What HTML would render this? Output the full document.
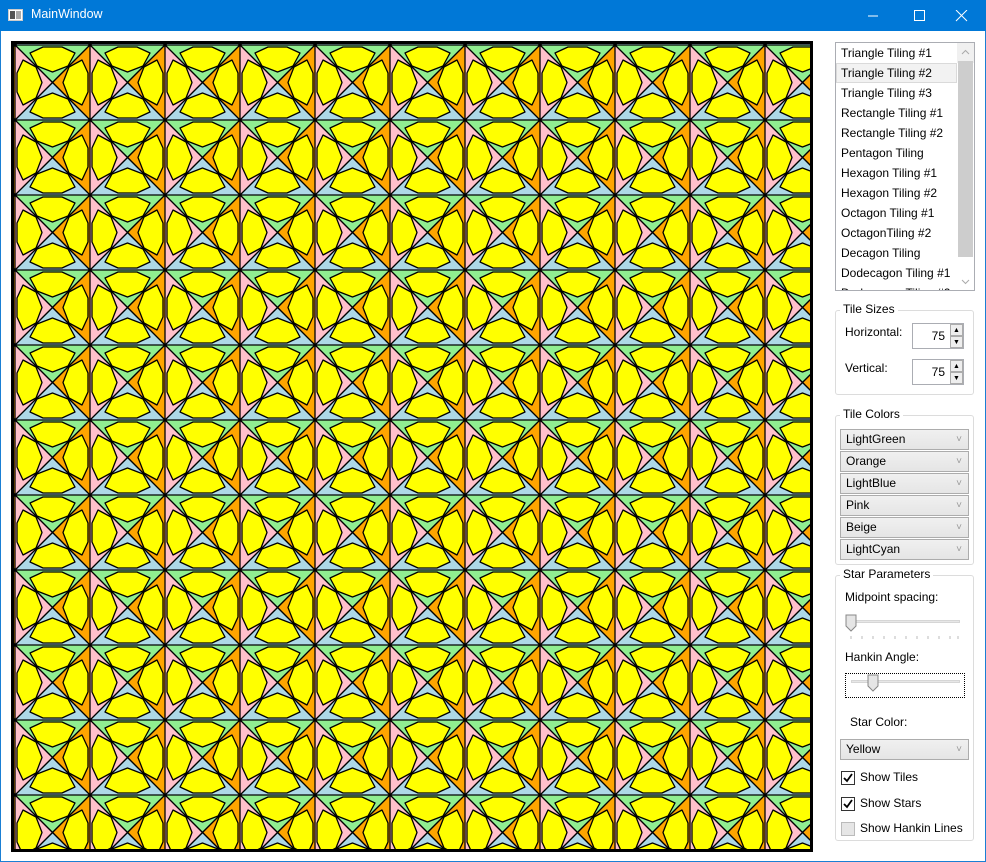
<!DOCTYPE html>
<html><head><meta charset="utf-8"><style>
*{box-sizing:border-box}
body{margin:0;width:986px;height:862px;overflow:hidden;font-family:"Segoe UI","Liberation Sans",sans-serif;font-size:12px;color:#000;background:#fff;position:relative}
.tb{position:absolute;left:0;top:0;width:986px;height:31px;background:#0078d7;color:#fff}
.tb .t{position:absolute;left:31px;top:7px;font-size:12.5px}
.win{position:absolute;left:0;top:31px;width:986px;height:831px;border:1px solid #1a7fd4;border-top:none;background:#fff}
.abs{position:absolute}
.lb{left:835px;top:42px;width:140px;height:249px;border:1px solid #abadb3;overflow:hidden}
.lb div{height:20px;line-height:20px;padding-left:5px;white-space:nowrap}
.sb{position:absolute;right:0;top:0;width:17px;height:247px;background:#f0f0f0}
.grp{border:1px solid #dcdcdc;border-radius:3px}
.gl{position:absolute;background:#fff;padding:0 3px;left:4px;top:-9px}
.dd{position:absolute;left:4px;width:129px;height:21px;border:1px solid #acacac;background:linear-gradient(#f0f0f0,#e5e5e5);padding-left:5px;line-height:19px}
.dd:after{content:"˅";position:absolute;right:6px;top:0;font-size:10px;color:#999}
.sp{position:absolute;left:76px;width:52px;height:26px;border:1px solid #abadb3}
.sp span{position:absolute;right:18px;top:5px}
.sp i{position:absolute;right:0;width:13px;height:12px;border:1px solid #acacac;background:#eee;font-size:7px;text-align:center;line-height:11px;font-style:normal}
.cb{position:absolute;left:5px;width:14px;height:14px;border:1px solid #333;background:#fff}
</style></head><body>
<div class="tb"><svg class="abs" style="left:8px;top:9px" width="15" height="12"><rect x="0.5" y="0.5" width="14" height="11" fill="#fff" stroke="#ccc"/><rect x="2" y="2" width="5" height="8" fill="#555"/><rect x="8" y="2" width="5" height="8" fill="#aaa"/></svg><span class="t">MainWindow</span>
<svg class="abs" style="left:864px;top:10px" width="110" height="12"><line x1="4" y1="6" x2="14" y2="6" stroke="#fff"/><rect x="50.5" y="0.5" width="10" height="10" fill="none" stroke="#fff"/><path d="M92 0L103 11M103 0L92 11" stroke="#fff"/></svg></div>
<div class="win"></div>
<svg class="abs" style="left:11px;top:41px" width="802" height="811">
<defs><pattern id="p" x="4" y="4" width="75" height="75" patternUnits="userSpaceOnUse">
<g stroke="#000" stroke-width="1.3" stroke-linejoin="round">
<polygon points="0,0 75,0 37.5,37.5" fill="#90ee90"/>
<polygon points="75,0 75,75 37.5,37.5" fill="#ffa500"/>
<polygon points="0,75 75,75 37.5,37.5" fill="#add8e6"/>
<polygon points="0,0 0,75 37.5,37.5" fill="#ffc0cb"/>
<g id="s"><polygon points="15,8 28,2 47,2 60,8 53,21 37.5,27 22,21" fill="#ff0"/></g>
<use href="#s" transform="rotate(90 37.5 37.5)"/>
<use href="#s" transform="rotate(180 37.5 37.5)"/>
<use href="#s" transform="rotate(270 37.5 37.5)"/>
</g></pattern></defs>
<rect x="1.5" y="1.5" width="799" height="808" fill="url(#p)" stroke="#000" stroke-width="3"/>
</svg>
<div class="abs lb"><div>Triangle Tiling #1</div><div style="background:#f2f2f2;box-shadow:inset 0 0 0 1px #dadada;width:121px">Triangle Tiling #2</div><div>Triangle Tiling #3</div><div>Rectangle Tiling #1</div><div>Rectangle Tiling #2</div><div>Pentagon Tiling</div><div>Hexagon Tiling #1</div><div>Hexagon Tiling #2</div><div>Octagon Tiling #1</div><div>OctagonTiling #2</div><div>Decagon Tiling</div><div>Dodecagon Tiling #1</div><div>Dodecagon Tiling #2</div>
<div class="sb"><div style="position:absolute;left:1px;top:18px;width:15px;height:196px;background:#cdcdcd"></div>
<svg class="abs" style="left:4px;top:6px" width="9" height="6"><path d="M1 5L4.5 1.5L8 5" fill="none" stroke="#aaa"/></svg>
<svg class="abs" style="left:4px;top:236px" width="9" height="6"><path d="M1 1L4.5 4.5L8 1" fill="none" stroke="#aaa"/></svg></div></div>
<div class="abs grp" style="left:835px;top:310px;width:139px;height:85px"><span class="gl">Tile Sizes</span>
<span class="abs" style="left:9px;top:14px">Horizontal:</span><div class="sp" style="top:12px"><span>75</span><i style="top:0">▲</i><i style="top:12px">▼</i></div>
<span class="abs" style="left:9px;top:50px">Vertical:</span><div class="sp" style="top:48px"><span>75</span><i style="top:0">▲</i><i style="top:12px">▼</i></div></div>
<div class="abs grp" style="left:835px;top:415px;width:139px;height:150px"><span class="gl">Tile Colors</span>
<div class="dd" style="top:13px">LightGreen</div><div class="dd" style="top:35px">Orange</div><div class="dd" style="top:57px">LightBlue</div><div class="dd" style="top:79px">Pink</div><div class="dd" style="top:101px">Beige</div><div class="dd" style="top:123px">LightCyan</div></div>
<div class="abs grp" style="left:835px;top:575px;width:139px;height:266px"><span class="gl">Star Parameters</span>
<span class="abs" style="left:9px;top:14px">Midpoint spacing:</span>
<div class="abs" style="left:15px;top:44px;width:109px;height:3px;background:#e7e7e7;border:1px solid #d6d6d6"></div>
<svg class="abs" style="left:9px;top:38px" width="120" height="25"><path d="M1 1h10v11l-5 5l-5-5z" fill="#e5e5e5" stroke="#888"/><g stroke="#bbb"><path d="M6 22v3M17 22v3M28 22v3M39 22v3M50 22v3M61 22v3M72 22v3M83 22v3M94 22v3M105 22v3M113 22v3"/></g></svg>
<span class="abs" style="left:9px;top:74px">Hankin Angle:</span>
<div class="abs" style="left:9px;top:97px;width:120px;height:25px;border:1px dotted #000"></div>
<div class="abs" style="left:15px;top:104px;width:109px;height:3px;background:#e7e7e7;border:1px solid #d6d6d6"></div>
<svg class="abs" style="left:31px;top:98px" width="14" height="20"><path d="M1 1h10v11l-5 5l-5-5z" fill="#e5e5e5" stroke="#888"/></svg>
<span class="abs" style="left:14px;top:139px">Star Color:</span>
<div class="dd" style="top:163px;width:129px">Yellow</div>
<div class="cb" style="top:195px"><svg width="12" height="12"><path d="M2 6l3 3l5-7" fill="none" stroke="#000" stroke-width="1.8"/></svg></div><span class="abs" style="left:24px;top:194px">Show Tiles</span>
<div class="cb" style="top:221px"><svg width="12" height="12"><path d="M2 6l3 3l5-7" fill="none" stroke="#000" stroke-width="1.8"/></svg></div><span class="abs" style="left:24px;top:220px">Show Stars</span>
<div class="cb" style="top:246px;background:#e6e6e6;border-color:#bbb"></div><span class="abs" style="left:24px;top:245px">Show Hankin Lines</span>
</div>
</body></html>
